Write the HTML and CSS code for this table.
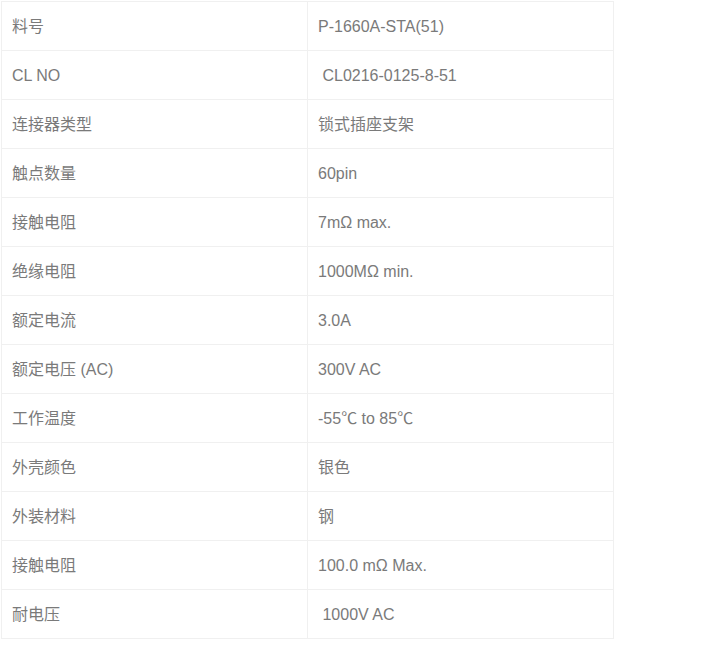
FILE: index.html
```html
<!DOCTYPE html>
<html lang="zh">
<head>
<meta charset="utf-8">
<title>规格</title>
<link rel="stylesheet" href="styles.css">
</head>
<body>
<table class="spec">
<tr><td class="k">料号</td><td class="v">P-1660A-STA(51)</td></tr>
<tr><td class="k">CL NO</td><td class="v">&nbsp;CL0216-0125-8-51</td></tr>
<tr><td class="k">连接器类型</td><td class="v">锁式插座支架</td></tr>
<tr><td class="k">触点数量</td><td class="v">60pin</td></tr>
<tr><td class="k">接触电阻</td><td class="v">7mΩ max.</td></tr>
<tr><td class="k">绝缘电阻</td><td class="v">1000MΩ min.</td></tr>
<tr><td class="k">额定电流</td><td class="v">3.0A</td></tr>
<tr><td class="k">额定电压 (AC)</td><td class="v">300V AC</td></tr>
<tr><td class="k">工作温度</td><td class="v">-55℃ to 85℃</td></tr>
<tr><td class="k">外壳颜色</td><td class="v">银色</td></tr>
<tr><td class="k">外装材料</td><td class="v">钢</td></tr>
<tr><td class="k">接触电阻</td><td class="v">100.0 mΩ Max.</td></tr>
<tr><td class="k">耐电压</td><td class="v">&nbsp;1000V AC</td></tr>
</table>
</body>
</html>
```
FILE: styles.css
```css
html, body {
  margin: 0;
  padding: 0;
  background: #fff;
}
body {
  font-family: "Liberation Sans", Arial, "Noto Sans CJK SC", sans-serif;
  font-size: 16px;
  color: #7a7a7a;
}
.spec {
  border-collapse: collapse;
  margin: 1px 0 0 1px;
  width: 613px;
  table-layout: fixed;
}
.spec td {
  border: 1px solid #f0f0f0;
  height: 49px;
  padding: 2px 10px 0;
  vertical-align: middle;
  line-height: 20px;
  box-sizing: border-box;
}
.spec td.k {
  width: 306px;
}
```
